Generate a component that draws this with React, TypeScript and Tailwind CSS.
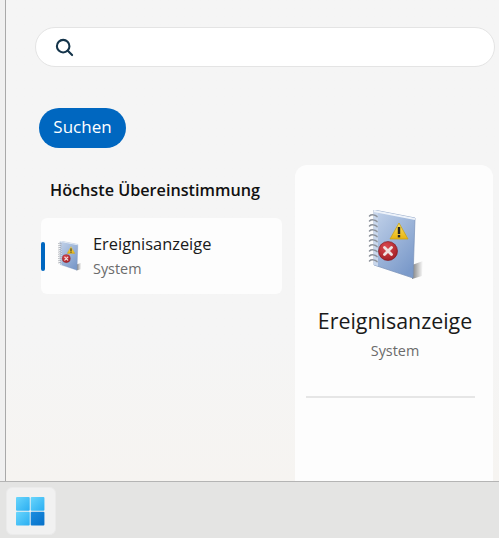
import { useId } from 'react'

function LogIcon({ className }: { className?: string }) {
  const id = useId()
  const rings = [4, 9, 14, 19, 24, 29, 34, 39, 44, 49]
  return (
    <svg viewBox="0 0 57 70" className={className}>
      <defs>
        <linearGradient id={id + 'b'} x1="0" y1="0" x2="0.7" y2="1">
          <stop offset="0" stopColor="#c3d3ea" />
          <stop offset="1" stopColor="#7b9aca" />
        </linearGradient>
        <linearGradient id={id + 's'} x1="0" y1="0" x2="1" y2="0">
          <stop offset="0" stopColor="#000" stopOpacity="0.5" />
          <stop offset="1" stopColor="#000" stopOpacity="0" />
        </linearGradient>
        <linearGradient id={id + 't'} x1="0" y1="0" x2="0" y2="1">
          <stop offset="0" stopColor="#fbe36a" />
          <stop offset="1" stopColor="#e8b30f" />
        </linearGradient>
        <radialGradient id={id + 'r'} cx="0.4" cy="0.3" r="0.8">
          <stop offset="0" stopColor="#dc4a50" />
          <stop offset="1" stopColor="#9c1a20" />
        </radialGradient>
      </defs>
      <path d="M45 55 L56 51 L55 66 L45 69 Z" fill={`url(#${id}s)`} />
      <path d="M7 0 L48 8 L46 68 L7 55 Z" fill={`url(#${id}b)`} stroke="#7890b8" strokeWidth="0.7" />
      <path d="M7 0 L11 1 L11 56 L7 55 Z" fill="#c9d7ec" />
      <path d="M7 0 L48 8 L47.9 10 L7 2 Z" fill="#eef3fa" />
      {rings.map((y) => (
        <path key={y} d="M2.5 0 C4 -1.6 8 -1.6 10 0.6" transform={`translate(0 ${y + 2})`} fill="none" stroke="#8b9099" strokeWidth="1.5" strokeLinecap="round" />
      ))}
      <path d="M23 29 L32 13 L41 29 Z" fill={`url(#${id}t)`} stroke="#c9a21a" strokeWidth="0.8" strokeLinejoin="round" />
      <rect x="30.8" y="17" width="2.4" height="7" fill="#222" />
      <rect x="30.8" y="25" width="2.4" height="2.4" fill="#222" />
      <circle cx="21" cy="41" r="9.5" fill={`url(#${id}r)`} stroke="#7d1018" strokeWidth="0.6" />
      <path d="M17.5 37.5 L24.5 44.5 M24.5 37.5 L17.5 44.5" stroke="#efe3e1" strokeWidth="2.8" strokeLinecap="round" />
    </svg>
  )
}

function WinLogo() {
  return (
    <svg viewBox="0 0 30 30" className="h-[29px] w-[29px]">
      <defs>
        <linearGradient id="w1" x1="0" y1="0" x2="1" y2="1">
          <stop offset="0" stopColor="#6ad6fc" />
          <stop offset="1" stopColor="#2aaef2" />
        </linearGradient>
        <linearGradient id="w2" x1="0" y1="0" x2="1" y2="1">
          <stop offset="0" stopColor="#1b8de0" />
          <stop offset="1" stopColor="#0670c8" />
        </linearGradient>
      </defs>
      <rect x="0" y="0" width="14.2" height="14.2" rx="1" fill="url(#w1)" />
      <rect x="15.2" y="0" width="14.2" height="14.2" rx="1" fill="url(#w1)" />
      <rect x="0" y="15.2" width="14.2" height="14.2" rx="1" fill="url(#w1)" />
      <rect x="15.2" y="15.2" width="14.2" height="14.2" rx="1" fill="url(#w2)" />
    </svg>
  )
}

export default function App() {
  return (
    <div className="flex h-[538px] w-[499px] flex-col overflow-hidden bg-[#e4e4e3] font-['Open_Sans','Noto_Sans',sans-serif]">
      <div className="flex h-[482px] border-b border-[#b4b4b4]">
        <div className="w-[5px] bg-[#f0f0f0]" />
        <div className="flex-1 border-l border-[#a9a9a9] bg-gradient-to-b from-[#f5f5f5] from-70% to-[#f6f4f1] pt-[27px]">
          <div className="ml-[29px] flex h-10 w-[460px] items-center rounded-[20px] border border-[#e4e4e4] bg-white pl-[19px]">
            <svg viewBox="0 0 20 20" fill="none" stroke="#14344a" strokeWidth="2.2" className="h-[19px] w-[19px]">
              <circle cx="8.6" cy="8.6" r="6.6" />
              <path d="M13.5 13.5 L18 18" strokeLinecap="round" />
            </svg>
          </div>
          <button className="ml-[33px] mt-[41px] flex h-10 w-[87px] items-center justify-center rounded-[20px] bg-[#0067c0] pb-[2px] text-[17px] text-white">
            Suchen
          </button>
          <div className="flex">
            <div className="ml-[35px] w-[241px]">
              <h2 className="ml-[9px] mt-[31px] text-[16.2px] font-semibold leading-[22px] text-[#111]">
                Höchste Übereinstimmung
              </h2>
              <div className="relative mt-[17px] flex h-[76px] items-center rounded-md bg-[#fdfdfd] pl-[16px]">
                <div className="absolute left-0 top-[24px] h-[29px] w-1 rounded-sm bg-[#0067c0]" />
                <LogIcon className="h-[30px] w-[25px]" />
                <div className="ml-[11px]">
                  <div className="text-[16.4px] leading-[22px] text-[#1a1a1a]">Ereignisanzeige</div>
                  <div className="mt-[4px] text-[14.4px] leading-[20px] text-[#6b6b6b]">System</div>
                </div>
              </div>
            </div>
            <div className="ml-[13px] mt-[17px] h-[316px] w-[198px] rounded-t-xl bg-[#fdfdfd] pt-[45px]">
              <div className="w-[180px] pl-[11px]">
                <div className="flex w-[178px] flex-col items-center">
                  <LogIcon className="h-[70px] w-[57px]" />
                  <div className="mt-[27px] text-[21.4px] leading-[28px] text-[#1a1a1a]">Ereignisanzeige</div>
                  <div className="mt-[6px] text-[14.4px] leading-[20px] text-[#6b6b6b]">System</div>
                </div>
                <div className="mt-[35px] h-0.5 w-[169px] bg-[#e6e6e6]" />
              </div>
            </div>
          </div>
        </div>
      </div>
      <div className="flex flex-1 items-start pl-[6px] pt-[5px]">
        <div className="flex h-[48px] w-[50px] items-center justify-center rounded-md border border-[#ebebeb] bg-[#f1f1f1] pr-px">
          <WinLogo />
        </div>
      </div>
    </div>
  )
}
